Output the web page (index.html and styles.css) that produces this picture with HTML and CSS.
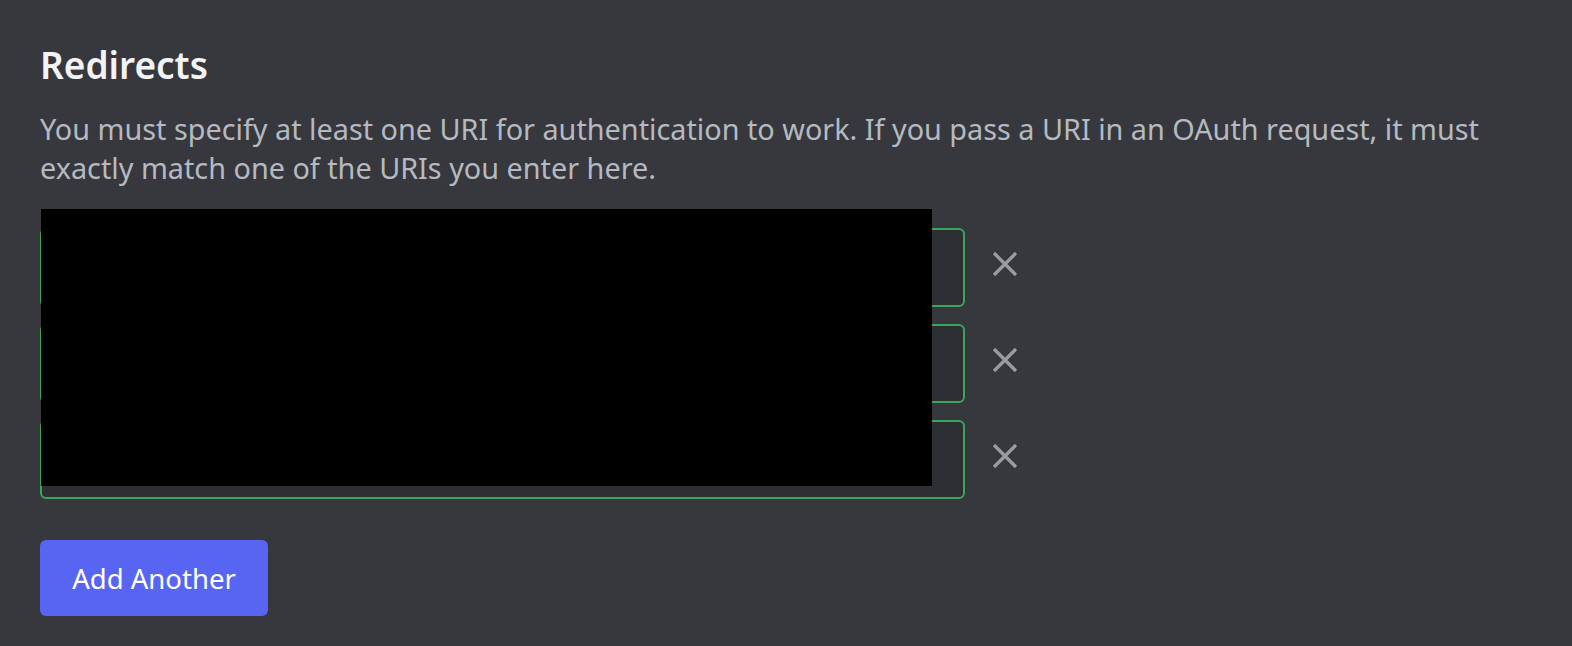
FILE: index.html
```html
<!DOCTYPE html>
<html lang="en">
<head>
<meta charset="utf-8">
<title>Redirects</title>
<link rel="stylesheet" href="styles.css">
</head>
<body>
<section class="redirects">
  <h2 class="title">Redirects</h2>
  <p class="desc">You must specify at least one URI for authentication to work. If you pass a URI in an OAuth request, it must exactly match one of the URIs you enter here.</p>
  <div class="list">
    <div class="row">
      <div class="field"><input class="input" type="text" value=""></div>
      <button class="remove" aria-label="Remove">
        <svg viewBox="0 0 26 26" width="26" height="26"><path d="M2 2 L24 24 M24 2 L2 24" stroke="currentColor" stroke-width="3.2" fill="none"/></svg>
      </button>
    </div>
    <div class="row">
      <div class="field"><input class="input" type="text" value=""></div>
      <button class="remove" aria-label="Remove">
        <svg viewBox="0 0 26 26" width="26" height="26"><path d="M2 2 L24 24 M24 2 L2 24" stroke="currentColor" stroke-width="3.2" fill="none"/></svg>
      </button>
    </div>
    <div class="row">
      <div class="field"><input class="input" type="text" value=""></div>
      <button class="remove" aria-label="Remove">
        <svg viewBox="0 0 26 26" width="26" height="26"><path d="M2 2 L24 24 M24 2 L2 24" stroke="currentColor" stroke-width="3.2" fill="none"/></svg>
      </button>
    </div>
    <div class="redaction"></div>
  </div>
  <button class="add">Add Another</button>
</section>
</body>
</html>
```

FILE: styles.css
```css
html, body {
  margin: 0;
  padding: 0;
  background: #37383e;
  height: 100%;
}
body {
  font-family: "Noto Sans", "Open Sans", sans-serif;
}
.redirects {
  padding: 41px 0 0 40px;
  width: 1490px;
}
.title {
  margin: 0;
  font-size: 37px;
  line-height: 48px;
  font-weight: 600;
  color: #f2f3f5;
}
.desc {
  margin: 20px 0 0 0;
  font-size: 28.8px;
  line-height: 39px;
  color: #b5bac1;
}
.list {
  position: relative;
  margin-top: 41px;
  display: flex;
  flex-direction: column;
  gap: 17px;
}
.row {
  display: flex;
  align-items: center;
  gap: 27px;
}
.field {
  width: 925px;
  height: 79px;
  box-sizing: border-box;
  border: 2px solid #3ba55c;
  border-radius: 6px;
  background: #2e2f34;
}
.input {
  width: 100%;
  height: 100%;
  border: 0;
  background: transparent;
  outline: none;
}
.remove {
  width: 26px;
  height: 26px;
  padding: 0;
  border: 0;
  background: none;
  color: #9b9ca1;
  margin-top: -7px;
}
.remove svg { display: block; }
.redaction {
  position: absolute;
  left: 1px;
  top: -19px;
  width: 891px;
  height: 277px;
  background: #000;
}
.add {
  margin-top: 41px;
  width: 228px;
  height: 76px;
  border: 0;
  border-radius: 6px;
  background: #5865f2;
  color: #fff;
  font-family: "Noto Sans", "Open Sans", sans-serif;
  font-size: 27.5px;
  font-weight: 400;
  padding: 0;
}
```
